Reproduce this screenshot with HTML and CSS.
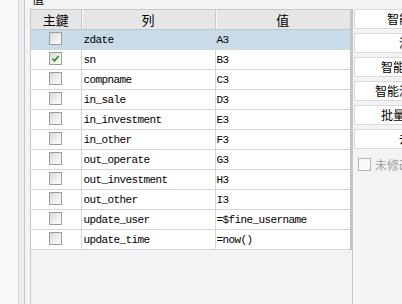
FILE: index.html
```html
<!DOCTYPE html>
<html lang="zh">

<head>
    <meta charset="UTF-8">
    <title>值</title>
    <link rel="stylesheet" href="styles.css">
</head>

<body>
    <div class="page">
        <div class="gutter"></div>
        <div class="gutter-inner"></div>
        <div class="gap"></div>

        <div class="main">
            <div class="legend"><span>值</span></div>
            <div class="pane">
                <table class="grid">
                    <colgroup>
                        <col class="c-key">
                        <col class="c-col">
                        <col class="c-val">
                    </colgroup>
                    <thead>
                        <tr>
                            <th>主鍵</th>
                            <th>列</th>
                            <th>值</th>
                        </tr>
                    </thead>
                    <tbody>
                        <tr class="selected">
                            <td class="key"><span class="box"></span></td>
                            <td>zdate</td>
                            <td>A3</td>
                        </tr>
                        <tr>
                            <td class="key"><span class="box checked"><svg viewBox="0 0 11 11" width="11" height="11"><path d="M2.5 5.5 L4.5 7.8 L8.6 3" fill="none" stroke="#2b9a2b" stroke-width="1.8"/></svg></span></td>
                            <td>sn</td>
                            <td>B3</td>
                        </tr>
                        <tr>
                            <td class="key"><span class="box"></span></td>
                            <td>compname</td>
                            <td>C3</td>
                        </tr>
                        <tr>
                            <td class="key"><span class="box"></span></td>
                            <td>in_sale</td>
                            <td>D3</td>
                        </tr>
                        <tr>
                            <td class="key"><span class="box"></span></td>
                            <td>in_investment</td>
                            <td>E3</td>
                        </tr>
                        <tr>
                            <td class="key"><span class="box"></span></td>
                            <td>in_other</td>
                            <td>F3</td>
                        </tr>
                        <tr>
                            <td class="key"><span class="box"></span></td>
                            <td>out_operate</td>
                            <td>G3</td>
                        </tr>
                        <tr>
                            <td class="key"><span class="box"></span></td>
                            <td>out_investment</td>
                            <td>H3</td>
                        </tr>
                        <tr>
                            <td class="key"><span class="box"></span></td>
                            <td>out_other</td>
                            <td>I3</td>
                        </tr>
                        <tr>
                            <td class="key"><span class="box"></span></td>
                            <td>update_user</td>
                            <td>=$fine_username</td>
                        </tr>
                        <tr>
                            <td class="key"><span class="box"></span></td>
                            <td>update_time</td>
                            <td>=now()</td>
                        </tr>
                    </tbody>
                </table>
            </div>
        </div>

        <div class="side">
            <button class="btn">智能添加字段</button>
            <button class="btn">添加字段</button>
            <button class="btn">智能添加单元格</button>
            <button class="btn">智能添加单元格组</button>
            <button class="btn">批量修改单元格</button>
            <button class="btn">去除字段</button>
            <label class="opt"><span class="opt-box"></span>未修改不更新</label>
        </div>
    </div>
</body>

</html>
```

FILE: styles.css
```css
body {
    margin: 0;
    width: 402px;
    height: 304px;
    overflow: hidden;
    background-color: #f3f3f5;
    font-family: "Noto Sans CJK SC", "Liberation Sans", sans-serif;
    font-size: 12px;
    color: #000;
}

.page {
    display: flex;
    height: 304px;
}

.gutter {
    flex: 0 0 18px;
    background-color: #fafafa;
    border-right: 1px solid #d4d4d4;
}

.gutter-inner {
    flex: 0 0 5px;
    background-color: #efeff1;
    border-right: 1px solid #c8c8c8;
}

.gap {
    flex: 0 0 5px;
}

.main {
    flex: 0 0 322px;
    display: flex;
    flex-direction: column;
}

.legend {
    height: 9px;
    overflow: hidden;
    padding-left: 2px;
}

.legend span {
    display: block;
    margin-top: -8px;
    line-height: 14px;
    font-size: 12px;
}

.pane {
    flex: 1;
    border: 1px solid #c8c8c8;
    border-bottom: none;
}

.grid {
    border-collapse: collapse;
    table-layout: fixed;
    width: 320px;
    font-family: "Liberation Mono", "DejaVu Sans Mono", monospace;
    font-size: 11px;
    letter-spacing: -0.6px;
}

.c-key {
    width: 50px;
}

.c-col {
    width: 134px;
}

.c-val {
    width: 136px;
}

.grid th {
    height: 19px;
    padding: 0;
    background-color: #e6e6e6;
    border-bottom: 1px solid #c4c4c4;
    border-right: 1px solid #c8c8c8;
    font-family: "Noto Sans CJK SC", sans-serif;
    font-size: 13px;
    font-weight: normal;
    letter-spacing: 0;
    line-height: 18px;
}

.grid th + th {
    box-shadow: inset 1px 0 #fafafa;
}

.grid th:last-child {
    border-right: 2px solid #c4c4c4;
}

.grid td {
    height: 19px;
    padding: 0 0 0 2px;
    border-right: 1px solid #d6d6d6;
    border-bottom: 1px solid #d6d6d6;
    background-color: #fff;
    white-space: nowrap;
    overflow: hidden;
}

.grid td:last-child {
    padding-left: 1px;
    border-right: 2px solid #c4c4c4;
}

.grid .selected td {
    background-color: #c8dbe8;
}

.grid td.key {
    padding: 0;
    text-align: center;
}

.box {
    display: inline-flex;
    align-items: center;
    justify-content: center;
    width: 11px;
    height: 11px;
    border: 1px solid #9e9e9e;
    background: linear-gradient(135deg, #d9d9d9, #f4f4f4 70%, #fcfcfc);
    vertical-align: middle;
    margin-top: -2px;
}

.side {
    flex: 0 0 auto;
    display: flex;
    flex-direction: column;
    gap: 4px;
    padding-top: 9px;
    padding-left: 1px;
}

.btn {
    width: 138px;
    height: 20px;
    padding: 0;
    border: 1px solid #dadada;
    border-radius: 2px;
    background-color: #fff;
    font-family: "Noto Sans CJK SC", sans-serif;
    font-size: 12px;
    line-height: 18px;
    color: #000;
    white-space: nowrap;
    flex-shrink: 0;
}

.opt {
    display: flex;
    align-items: center;
    gap: 4px;
    height: 18px;
    padding-left: 4px;
    margin-top: 2px;
    color: #a0a0a0;
    font-size: 12px;
    white-space: nowrap;
}

.opt-box {
    width: 11px;
    height: 11px;
    border: 1px solid #b4b4b4;
    background-color: #fafafa;
}
```
